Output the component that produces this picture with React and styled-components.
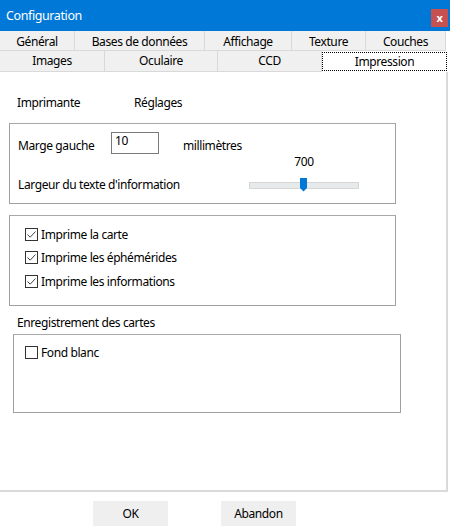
import React from 'react';
import styled, { createGlobalStyle } from 'styled-components';

const GlobalStyle = createGlobalStyle`
  html, body {
    margin: 0;
    padding: 0;
    background: #ffffff;
  }
  body {
    font-family: "Noto Sans", "Open Sans", sans-serif;
    font-size: 12px;
    letter-spacing: -0.4px;
    color: #000;
  }
`;

const Window = styled.div`
  width: 450px;
  height: 532px;
  display: flex;
  flex-direction: column;
  background: #fff;
  overflow: hidden;
`;

const TitleBar = styled.div`
  height: 31px;
  background: #0078d7;
  display: flex;
  align-items: center;
  justify-content: space-between;
  padding-left: 6px;
  color: #fff;
  font-size: 12.5px;
`;

const CloseButton = styled.div`
  width: 17px;
  height: 18px;
  margin-right: 2px;
  margin-top: 4px;
  background: #c75050;
  color: #fff;
  font-size: 11px;
  font-weight: bold;
  display: flex;
  align-items: center;
  justify-content: center;
`;

const TabRow = styled.div`
  display: flex;
  height: ${({ h }) => h}px;
  background: #fff;
`;

const Tab = styled.div`
  width: ${({ w }) => w}px;
  box-sizing: border-box;
  background: #f0f0f0;
  border-right: 1px solid #d9d9d9;
  border-bottom: 1px solid #d9d9d9;
  padding-top: ${({ pt }) => pt || 0}px;
  display: flex;
  align-items: center;
  justify-content: center;
  line-height: 1;
`;

const ActiveTab = styled.div`
  width: ${({ w }) => w}px;
  box-sizing: border-box;
  margin-top: 1px;
  height: 19px;
  background: #fff;
  border: 1px dotted #000;
  display: flex;
  align-items: center;
  justify-content: center;
  line-height: 1;
`;

const Panel = styled.div`
  width: 448px;
  height: 420px;
  box-sizing: border-box;
  border-right: 2px solid #dadada;
  border-bottom: 2px solid #dadada;
  display: flex;
  flex-direction: column;
`;

const HeaderRow = styled.div`
  display: flex;
  margin: 24px 0 0 17px;
  height: 14px;
  line-height: 14px;
`;

const HeaderItem = styled.span`
  width: ${({ w }) => w}px;
`;

const Group = styled.div`
  margin-top: ${({ top }) => top}px;
  margin-left: ${({ left }) => left}px;
  width: ${({ w }) => w}px;
  height: ${({ h }) => h}px;
  box-sizing: border-box;
  border: 1px solid #a0a0a0;
  border-top-color: #a8a8a8;
  display: flex;
  flex-direction: column;
  padding: ${({ pad }) => pad};
`;

const FieldRow = styled.div`
  display: flex;
  align-items: center;
  height: 22px;
`;

const FieldLabel = styled.span`
  width: ${({ w }) => w}px;
  line-height: 14px;
  padding-top: ${({ pt }) => pt || 0}px;
`;

const NumberInput = styled.div`
  width: 48px;
  height: 22px;
  box-sizing: border-box;
  border: 1px solid #7a7a7a;
  padding: 1px 0 0 3px;
  line-height: 14px;
  margin-right: 24px;
`;

const SliderRow = styled.div`
  display: flex;
  align-items: flex-end;
  margin-top: 1px;
`;

const SliderColumn = styled.div`
  width: 110px;
  display: flex;
  flex-direction: column;
  align-items: center;
  gap: 9px;
`;

const SliderValue = styled.span`
  line-height: 14px;
`;

const SliderTrack = styled.div`
  position: relative;
  width: 110px;
  height: 14px;
  display: flex;
  align-items: center;
`;

const TrackBar = styled.div`
  width: 100%;
  height: 7px;
  box-sizing: border-box;
  background: #e7eaea;
  border: 1px solid #d6d6d6;
`;

const Thumb = styled.svg`
  position: absolute;
  top: 0;
  left: 51px;
`;

const CheckRow = styled.div`
  display: flex;
  align-items: center;
  height: 14px;
  margin-top: ${({ gap }) => gap}px;
  gap: 3px;
`;

const Box = styled.div`
  width: 13px;
  height: 13px;
  box-sizing: border-box;
  border: 1px solid #333;
  background: #fff;
  display: flex;
  align-items: center;
  justify-content: center;
`;

const SectionLabel = styled.div`
  margin: 10px 0 0 17px;
  line-height: 14px;
  height: 14px;
`;

const Footer = styled.div`
  display: flex;
  margin-top: 9px;
  padding-left: 93px;
  gap: 53px;
`;

const Button = styled.div`
  width: 75px;
  height: 25px;
  background: #efefef;
  display: flex;
  align-items: center;
  justify-content: center;
`;

const Check = ({ checked, label, gap }) => (
  <CheckRow gap={gap}>
    <Box>
      {checked && (
        <svg width="11" height="11" viewBox="0 0 11 11">
          <path d="M1.5 5.5 L4.2 8.2 L9.5 2.5" fill="none" stroke="#444" strokeWidth="1" />
        </svg>
      )}
    </Box>
    <span>{label}</span>
  </CheckRow>
);

const topTabs = [
  ['Général', 75],
  ['Bases de données', 130],
  ['Affichage', 87],
  ['Texture', 74],
  ['Couches', 80],
];

const bottomTabs = [
  ['Images', 105],
  ['Oculaire', 113],
  ['CCD', 104],
];

const App = () => {
  return (
    <Window>
      <GlobalStyle />
      <TitleBar>
        <span>Configuration</span>
        <CloseButton>x</CloseButton>
      </TitleBar>
      <TabRow h={20}>
        {topTabs.map(([name, w]) => (
          <Tab key={name} w={w} pt={2}>{name}</Tab>
        ))}
      </TabRow>
      <TabRow h={21}>
        {bottomTabs.map(([name, w]) => (
          <Tab key={name} w={w}>{name}</Tab>
        ))}
        <ActiveTab w={125}>Impression</ActiveTab>
      </TabRow>
      <Panel>
        <HeaderRow>
          <HeaderItem w={117}>Imprimante</HeaderItem>
          <HeaderItem>Réglages</HeaderItem>
        </HeaderRow>
        <Group top={13} left={9} w={387} h={81} pad="8px 0 0 8px">
          <FieldRow>
            <FieldLabel w={93} pt={5}>Marge gauche</FieldLabel>
            <NumberInput>10</NumberInput>
            <FieldLabel pt={5}>millimètres</FieldLabel>
          </FieldRow>
          <SliderRow>
            <FieldLabel w={231}>Largeur du texte d'information</FieldLabel>
            <SliderColumn>
              <SliderValue>700</SliderValue>
              <SliderTrack>
                <TrackBar />
                <Thumb width="7" height="14" viewBox="0 0 7 14">
                  <path d="M0 0 H7 V10 L3.5 13.5 L0 10 Z" fill="#0078d7" />
                </Thumb>
              </SliderTrack>
            </SliderColumn>
          </SliderRow>
        </Group>
        <Group top={11} left={9} w={387} h={91} pad="11px 0 0 15px">
          <Check checked gap={0} label="Imprime la carte" />
          <Check checked gap={9} label="Imprime les éphémérides" />
          <Check checked gap={10} label="Imprime les informations" />
        </Group>
        <SectionLabel>Enregistrement des cartes</SectionLabel>
        <Group top={4} left={13} w={388} h={79} pad="10px 0 0 11px">
          <Check gap={0} label="Fond blanc" />
        </Group>
      </Panel>
      <Footer>
        <Button>OK</Button>
        <Button>Abandon</Button>
      </Footer>
    </Window>
  );
};

export default App;
